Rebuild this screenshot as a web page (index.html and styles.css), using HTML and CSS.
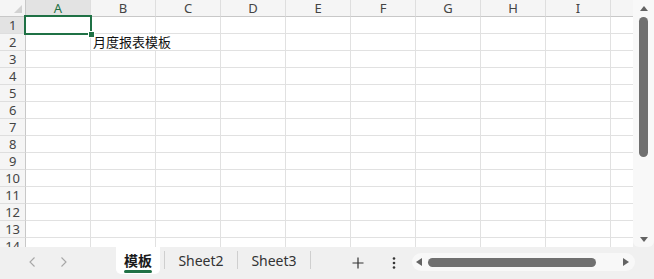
FILE: index.html
```html
<!DOCTYPE html>
<html lang="zh-CN">
<head>
<meta charset="utf-8">
<title>月度报表模板</title>
<link rel="stylesheet" href="styles.css">
</head>
<body>
<div class="app">
  <div class="sheet-wrap">
    <div class="sheet">
      <div class="corner"><svg width="8" height="8" viewBox="0 0 8 8"><polygon points="8,0 8,8 0,8" fill="#d2d2d2"/></svg></div>
      <div class="ch active">A</div><div class="ch">B</div><div class="ch">C</div><div class="ch">D</div><div class="ch">E</div><div class="ch">F</div><div class="ch">G</div><div class="ch">H</div><div class="ch">I</div><div class="ch">J</div>

      <div class="rh active">1</div><div class="c a1"><div class="sel"><span class="handle"></span></div></div><div class="c"></div><div class="c"></div><div class="c"></div><div class="c"></div><div class="c"></div><div class="c"></div><div class="c"></div><div class="c"></div><div class="c"></div>
      <div class="rh">2</div><div class="c"></div><div class="c txt">月度报表模板</div><div class="c"></div><div class="c"></div><div class="c"></div><div class="c"></div><div class="c"></div><div class="c"></div><div class="c"></div>
      <div class="rh">3</div><div class="c"></div><div class="c"></div><div class="c"></div><div class="c"></div><div class="c"></div><div class="c"></div><div class="c"></div><div class="c"></div><div class="c"></div><div class="c"></div>
      <div class="rh">4</div><div class="c"></div><div class="c"></div><div class="c"></div><div class="c"></div><div class="c"></div><div class="c"></div><div class="c"></div><div class="c"></div><div class="c"></div><div class="c"></div>
      <div class="rh">5</div><div class="c"></div><div class="c"></div><div class="c"></div><div class="c"></div><div class="c"></div><div class="c"></div><div class="c"></div><div class="c"></div><div class="c"></div><div class="c"></div>
      <div class="rh">6</div><div class="c"></div><div class="c"></div><div class="c"></div><div class="c"></div><div class="c"></div><div class="c"></div><div class="c"></div><div class="c"></div><div class="c"></div><div class="c"></div>
      <div class="rh">7</div><div class="c"></div><div class="c"></div><div class="c"></div><div class="c"></div><div class="c"></div><div class="c"></div><div class="c"></div><div class="c"></div><div class="c"></div><div class="c"></div>
      <div class="rh">8</div><div class="c"></div><div class="c"></div><div class="c"></div><div class="c"></div><div class="c"></div><div class="c"></div><div class="c"></div><div class="c"></div><div class="c"></div><div class="c"></div>
      <div class="rh">9</div><div class="c"></div><div class="c"></div><div class="c"></div><div class="c"></div><div class="c"></div><div class="c"></div><div class="c"></div><div class="c"></div><div class="c"></div><div class="c"></div>
      <div class="rh">10</div><div class="c"></div><div class="c"></div><div class="c"></div><div class="c"></div><div class="c"></div><div class="c"></div><div class="c"></div><div class="c"></div><div class="c"></div><div class="c"></div>
      <div class="rh">11</div><div class="c"></div><div class="c"></div><div class="c"></div><div class="c"></div><div class="c"></div><div class="c"></div><div class="c"></div><div class="c"></div><div class="c"></div><div class="c"></div>
      <div class="rh">12</div><div class="c"></div><div class="c"></div><div class="c"></div><div class="c"></div><div class="c"></div><div class="c"></div><div class="c"></div><div class="c"></div><div class="c"></div><div class="c"></div>
      <div class="rh">13</div><div class="c"></div><div class="c"></div><div class="c"></div><div class="c"></div><div class="c"></div><div class="c"></div><div class="c"></div><div class="c"></div><div class="c"></div><div class="c"></div>
      <div class="rh">14</div><div class="c"></div><div class="c"></div><div class="c"></div><div class="c"></div><div class="c"></div><div class="c"></div><div class="c"></div><div class="c"></div><div class="c"></div><div class="c"></div>
    </div>
  </div>

  <div class="vscroll">
    <svg class="arrow-up" width="8" height="5" viewBox="0 0 8 5"><polygon points="4,0 8,5 0,5" fill="#636363"/></svg>
    <div class="vthumb"></div>
    <svg class="arrow-down" width="8" height="5" viewBox="0 0 8 5"><polygon points="0,0 8,0 4,5" fill="#636363"/></svg>
  </div>

  <div class="bottombar">
    <div class="nav-btn"><svg width="6" height="10" viewBox="0 0 6 10"><polyline points="5.5,0.5 1,5 5.5,9.5" fill="none" stroke="#a6a6a6" stroke-width="1.1"/></svg></div>
    <div class="nav-btn"><svg width="6" height="10" viewBox="0 0 6 10"><polyline points="0.5,0.5 5,5 0.5,9.5" fill="none" stroke="#a6a6a6" stroke-width="1.1"/></svg></div>
    <div class="tabs">
      <div class="tab tab-active"><span class="tab-label">模板</span><span class="tab-underline"></span></div>
      <div class="sep first"></div>
      <div class="tab">Sheet2</div>
      <div class="sep"></div>
      <div class="tab">Sheet3</div>
      <div class="sep"></div>
    </div>
    <div class="icon-btn add"><svg width="12" height="12" viewBox="0 0 12 12"><path d="M6 0.5V11.5M0.5 6H11.5" stroke="#333" stroke-width="1.2" fill="none"/></svg></div>
    <div class="icon-btn more"><svg width="4" height="12" viewBox="0 0 4 12"><circle cx="2" cy="1.5" r="1.3" fill="#333"/><circle cx="2" cy="6" r="1.3" fill="#333"/><circle cx="2" cy="10.5" r="1.3" fill="#333"/></svg></div>
    <div class="hscroll">
      <svg width="6" height="8" viewBox="0 0 6 8"><polygon points="6,0 6,8 0,4" fill="#636363"/></svg>
      <div class="hthumb"></div>
      <svg class="arrow-right" width="6" height="8" viewBox="0 0 6 8"><polygon points="0,0 6,4 0,8" fill="#636363"/></svg>
    </div>
  </div>
</div>
</body>
</html>
```

FILE: styles.css
```css
html, body {
  margin: 0;
  padding: 0;
}
body {
  width: 654px;
  height: 279px;
  overflow: hidden;
  background: #f0f0f0;
  font-family: "Noto Sans", "Noto Sans CJK SC", sans-serif;
  color: #222;
}
.app {
  display: grid;
  grid-template-columns: 633px 21px;
  grid-template-rows: 247px 32px;
  width: 654px;
  height: 279px;
}
.sheet-wrap {
  overflow: hidden;
  background: #fff;
}
.sheet {
  display: grid;
  grid-template-columns: 26px repeat(10, 65px);
  grid-auto-rows: 17px;
  width: 676px;
}
.sheet > div {
  box-sizing: border-box;
}
.corner {
  background: #f5f5f5;
  border-right: 1px solid #c8c8c8;
  border-bottom: 1px solid #c8c8c8;
  display: flex;
  align-items: flex-end;
  justify-content: flex-end;
  padding: 0 3px 3px 0;
}
.corner svg {
  display: block;
}
.ch {
  background: #f5f5f5;
  border-right: 1px solid #dedede;
  border-bottom: 1px solid #c8c8c8;
  font-size: 13px;
  line-height: 16px;
  text-align: center;
  color: #444;
}
.ch.active {
  background: #e3e3e3;
  color: #1f7145;
}
.rh {
  background: #f5f5f5;
  border-right: 1px solid #c8c8c8;
  border-bottom: 1px solid #dedede;
  font-size: 13px;
  line-height: 16px;
  text-align: center;
  color: #444;
  letter-spacing: -0.3px;
}
.rh.active {
  background: #e3e3e3;
}
.c {
  border-right: 1px solid #e1e1e1;
  border-bottom: 1px solid #e1e1e1;
  background: #fff;
}
.a1 {
  position: relative;
}
.sel {
  position: absolute;
  left: -2px;
  top: -2px;
  width: 68px;
  height: 20px;
  box-sizing: border-box;
  border: 2px solid #1f7145;
  z-index: 2;
}
.handle {
  position: absolute;
  right: -4px;
  bottom: -4px;
  width: 5px;
  height: 5px;
  background: #1f7145;
  box-shadow: 0 0 0 1px #fff;
}
.txt {
  grid-column: span 2;
  font-family: "Noto Sans CJK SC", sans-serif;
  font-size: 13px;
  line-height: 16px;
  padding-left: 2px;
  color: #111;
  white-space: nowrap;
}

/* vertical scrollbar */
.vscroll {
  background: #f8f8f8;
  display: flex;
  flex-direction: column;
  align-items: center;
  padding-top: 6px;
  padding-bottom: 5px;
  box-sizing: border-box;
  border-radius: 0 0 6px 6px;
}
.vscroll svg {
  display: block;
}
.vthumb {
  width: 9px;
  height: 140px;
  margin-top: 6px;
  border-radius: 4.5px;
  background: #707070;
}
.arrow-down {
  margin-top: auto;
}

/* bottom bar */
.bottombar {
  grid-column: 1 / span 2;
  display: flex;
  align-items: flex-start;
  padding-left: 16px;
  font-size: 14px;
}
.nav-btn {
  width: 32px;
  height: 30px;
  display: flex;
  align-items: center;
  justify-content: center;
}
.nav-btn svg {
  display: block;
}
.tabs {
  display: flex;
  align-items: flex-start;
  margin-left: 36px;
}
.tab {
  width: 72px;
  height: 27px;
  box-sizing: border-box;
  padding-top: 5px;
  line-height: 18px;
  text-align: center;
  color: #333;
}
.tab-active {
  width: 44px;
  background: #fff;
  border-radius: 0 0 5px 5px;
  display: flex;
  flex-direction: column;
  align-items: center;
  padding-top: 4px;
}
.tab-label {
  font-family: "Noto Sans CJK SC", sans-serif;
  font-weight: 700;
  color: #1a1a1a;
  line-height: 18px;
}
.tab-underline {
  width: 28px;
  height: 3px;
  margin-top: 1px;
  border-radius: 1.5px;
  background: #1f7145;
}
.sep {
  width: 1px;
  height: 18px;
  margin-top: 4px;
  background: #cfcfcf;
}
.sep.first {
  margin-left: 4px;
}
.icon-btn {
  width: 36px;
  height: 30px;
  display: flex;
  align-items: center;
  justify-content: center;
  padding-top: 2px;
  box-sizing: border-box;
}
.icon-btn svg {
  display: block;
}
.add {
  margin-left: 29px;
}
.hscroll {
  width: 223px;
  height: 18px;
  margin-top: 6px;
  box-sizing: border-box;
  border-radius: 9px;
  background: #f8f8f8;
  display: flex;
  align-items: center;
  padding: 0 6px 0 4px;
}
.hscroll svg {
  display: block;
}
.hthumb {
  width: 168px;
  height: 9px;
  margin-left: 6px;
  border-radius: 4.5px;
  background: #707070;
}
.arrow-right {
  margin-left: auto;
}
```
